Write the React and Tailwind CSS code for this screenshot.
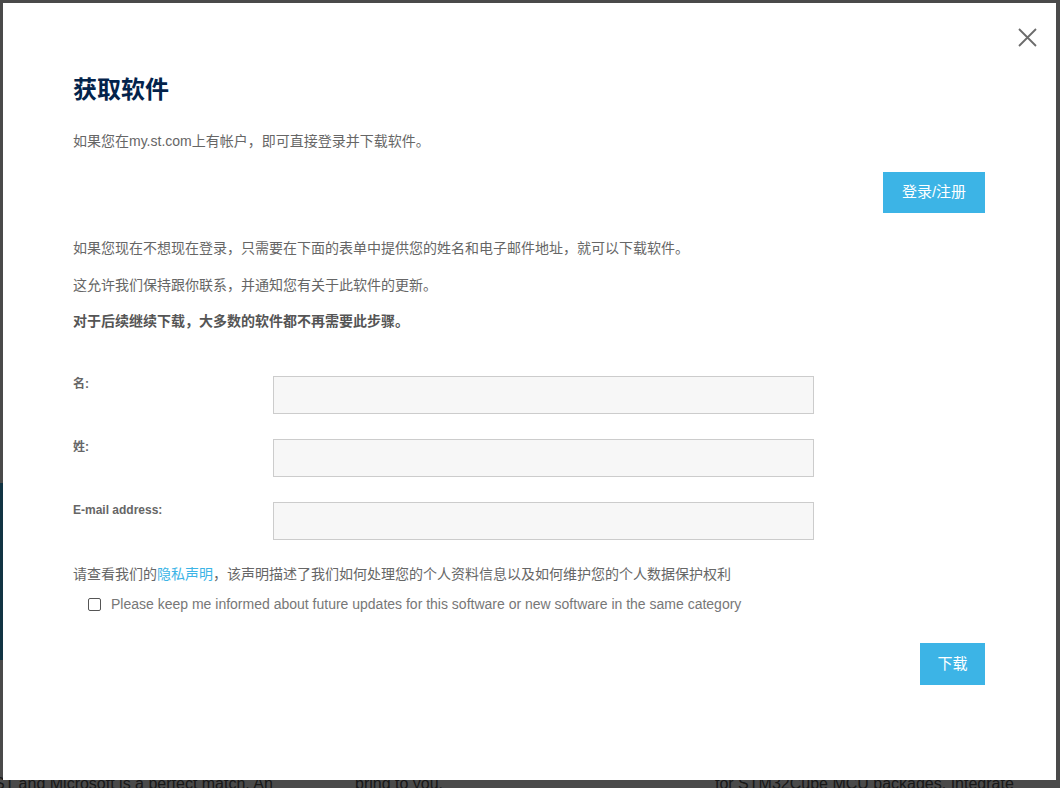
import React from "react";

const FONT = "font-['Liberation_Sans','Noto_Sans_CJK_SC',sans-serif]";

function FormRow({ label }) {
  return (
    <div className="flex items-start">
      <label className="w-[200px] text-[12px] font-bold leading-[16px] text-[#666]">{label}</label>
      <input
        type="text"
        className="w-[541px] h-[38px] border border-[#cccccc] bg-[#f7f7f7] px-3 text-[14px] text-[#333] outline-none"
      />
    </div>
  );
}

export default function App() {
  return (
    <div className={`relative w-[1060px] h-[788px] overflow-hidden bg-white ${FONT}`}>
      {/* page behind the dialog */}
      <div className="pt-[420px] text-[#555]">
        <div className="ml-[-40px] text-[22px] font-bold leading-[30px]">Us</div>
        <div className="mt-[33px] ml-[-300px] w-[303px] h-[177px] bg-[#3cb4e6]"></div>
        <div className="mt-[16px] ml-[-60px] text-[22px] font-bold leading-[29px]">
          <div>Az</div>
          <div>Mv</div>
          <div>Sz</div>
        </div>
        <div className="mt-[9px] flex gap-[20px] text-[16px] leading-[24px]">
          <div className="ml-[-6px] w-[341px] shrink-0">ST and Microsoft is a perfect match. An</div>
          <div className="w-[340px] shrink-0">bring to you.</div>
          <div className="w-[340px] shrink-0">for STM32Cube MCU packages. Integrate</div>
        </div>
      </div>

      {/* overlay */}
      <div className="absolute inset-0 bg-black/[0.71]"></div>

      {/* dialog */}
      <div className="absolute left-[3px] top-[3px] w-[1053px] h-[777px] bg-white pl-[70px] pr-[71px] pt-[72px]">
        <button className="absolute right-[19px] top-[25px] w-[19px] h-[19px] text-[#6b6b6b]">
          <svg viewBox="0 0 19 19" className="w-[19px] h-[19px]" fill="none" stroke="currentColor" strokeWidth="1.8">
            <path d="M1 1L18 18M18 1L1 18" />
          </svg>
        </button>

        <h2 className="text-[24px] leading-[30px] font-bold text-[#03234b]">获取软件</h2>
        <p className="mt-[26px] text-[14px] leading-[20px] text-[#666]">
          如果您在my.st.com上有帐户，即可直接登录并下载软件。
        </p>
        <div className="mt-[21px] flex justify-end">
          <button className="w-[102px] h-[41px] bg-[#3cb4e6] text-[15px] text-white">登录/注册</button>
        </div>

        <p className="mt-[25px] text-[14px] leading-[20px] text-[#666]">
          如果您现在不想现在登录，只需要在下面的表单中提供您的姓名和电子邮件地址，就可以下载软件。
        </p>
        <p className="mt-[17px] text-[14px] leading-[20px] text-[#666]">
          这允许我们保持跟你联系，并通知您有关于此软件的更新。
        </p>
        <p className="mt-[16px] text-[14px] leading-[20px] font-bold text-[#555]">
          对于后续继续下载，大多数的软件都不再需要此步骤。
        </p>

        <div className="mt-[45px] flex flex-col gap-[25px]">
          <FormRow label="名:" />
          <FormRow label="姓:" />
          <FormRow label="E-mail address:" />
        </div>

        <p className="mt-[24px] text-[14px] leading-[20px] text-[#666]">
          请查看我们的<a href="#" className="text-[#3cb4e6]">隐私声明</a>，该声明描述了我们如何处理您的个人资料信息以及如何维护您的个人数据保护权利
        </p>
        <div className="mt-[10px] ml-[15px] flex items-center gap-[10px]">
          <input
            type="checkbox"
            id="keepInformed"
            className="appearance-none w-[13px] h-[13px] border border-[#555] rounded-[2px] bg-white"
          />
          <label htmlFor="keepInformed" className="text-[14px] leading-[20px] text-[#777]">
            Please keep me informed about future updates for this software or new software in the same category
          </label>
        </div>

        <div className="mt-[29px] flex justify-end">
          <button className="w-[65px] h-[42px] bg-[#3cb4e6] text-[15px] text-white">下载</button>
        </div>
      </div>
    </div>
  );
}
